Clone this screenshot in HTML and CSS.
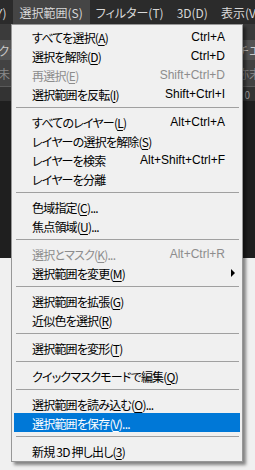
FILE: index.html
```html
<!DOCTYPE html>
<html lang="ja">
<head>
    <meta charset="UTF-8">
    <title>選択範囲メニュー</title>
    <link rel="stylesheet" href="styles.css">
</head>
<body>
<div class="screen">

    <div class="menubar">
        <span class="menu-title first">書式(Y)</span>
        <span class="menu-title open">選択範囲(S)</span>
        <span class="menu-title">フィルター(T)</span>
        <span class="menu-title">3D(D)</span>
        <span class="menu-title">表示(V)</span>
    </div>

    <div class="workspace">
        <div class="tabs"></div>
        <div class="options">
            <span class="edge-left">クか</span>
            <span class="edge-right">チエ</span>
        </div>
        <div class="doc-tabs">
            <span class="edge-left">未</span>
            <span class="edge-right">弥末</span>
        </div>
        <div class="ruler">
            <span class="edge-right">0</span>
        </div>
        <div class="pasteboard"></div>
        <div class="canvas"></div>
    </div>

    <div class="dropdown">
        <div class="item"><span class="label">すべてを選択(<u>A</u>)</span><span class="keys">Ctrl+A</span></div>
        <div class="item"><span class="label">選択を解除(<u>D</u>)</span><span class="keys">Ctrl+D</span></div>
        <div class="item disabled"><span class="label">再選択(<u>E</u>)</span><span class="keys">Shift+Ctrl+D</span></div>
        <div class="item"><span class="label">選択範囲を反転(<u>I</u>)</span><span class="keys">Shift+Ctrl+I</span></div>
        <div class="sep"></div>
        <div class="item"><span class="label">すべてのレイヤー(<u>L</u>)</span><span class="keys">Alt+Ctrl+A</span></div>
        <div class="item"><span class="label">レイヤーの選択を解除(<u>S</u>)</span></div>
        <div class="item"><span class="label">レイヤーを検索</span><span class="keys">Alt+Shift+Ctrl+F</span></div>
        <div class="item"><span class="label">レイヤーを分離</span></div>
        <div class="sep"></div>
        <div class="item"><span class="label">色域指定(<u>C</u>)...</span></div>
        <div class="item"><span class="label">焦点領域(<u>U</u>)...</span></div>
        <div class="sep"></div>
        <div class="item disabled"><span class="label">選択とマスク(<u>K</u>)...</span><span class="keys">Alt+Ctrl+R</span></div>
        <div class="item"><span class="label">選択範囲を変更(<u>M</u>)</span><span class="arrow"></span></div>
        <div class="sep"></div>
        <div class="item"><span class="label">選択範囲を拡張(<u>G</u>)</span></div>
        <div class="item"><span class="label">近似色を選択(<u>R</u>)</span></div>
        <div class="sep"></div>
        <div class="item"><span class="label">選択範囲を変形(<u>T</u>)</span></div>
        <div class="sep"></div>
        <div class="item"><span class="label">クイックマスクモードで編集(<u>Q</u>)</span></div>
        <div class="sep"></div>
        <div class="item"><span class="label">選択範囲を読み込む(<u>O</u>)...</span></div>
        <div class="item active"><span class="label">選択範囲を保存(<u>V</u>)...</span></div>
        <div class="sep"></div>
        <div class="item"><span class="label">新規 3D 押し出し(<u>3</u>)</span></div>
    </div>

</div>
</body>
</html>
```

FILE: styles.css
```css
body {
    margin: 0;
    font-family: "Noto Sans CJK JP", "Liberation Sans", sans-serif;
    font-size: 12px;
    background-color: #282828;
}

.screen {
    position: relative;
    width: 255px;
    height: 470px;
    overflow: hidden;
}

/* top menu bar */
.menubar {
    display: flex;
    height: 24px;
    background-color: #2b2b2b;
    color: #d8d8d8;
    font-feature-settings: "palt";
    white-space: nowrap;
}

.menu-title {
    display: flex;
    align-items: center;
    padding: 0 7px 0 6px;
}

.menu-title.first {
    margin-left: -38px;
}

.menu-title.open {
    background-color: #454545;
}

/* photoshop panels behind the menu */
.workspace {
    display: flex;
    flex-direction: column;
    color: #c8c8c8;
    white-space: nowrap;
}

.tabs {
    height: 16px;
    background-color: #3b3b3b;
}

.options,
.doc-tabs,
.ruler {
    display: flex;
    justify-content: space-between;
    align-items: center;
    overflow: hidden;
}

.options {
    height: 20px;
    background-color: #535353;
}

.doc-tabs {
    height: 26px;
    background-color: #424242;
    color: #8a8a8a;
}

.ruler {
    height: 14px;
    background-color: #333;
    border-top: 1px solid #5a5a5a;
    font-size: 10px;
    color: #9a9a9a;
}

.edge-left {
    margin-left: -2px;
}

.edge-right {
    margin-left: auto;
    margin-right: -6px;
}

.ruler .edge-right {
    margin-right: 5px;
}

.pasteboard {
    height: 157px;
    background-color: #1f1f1f;
}

.canvas {
    height: 212px;
    background-color: #f0f0f0;
}

/* dropdown */
.dropdown {
    position: absolute;
    top: 24px;
    left: 11px;
    width: 226px;
    padding: 2px 2px 1px 2px;
    background-color: #f0f0f0;
    border: 1px solid #979797;
    box-shadow: 3px 3px 3px rgba(0, 0, 0, 0.45);
    color: #000;
}

.item {
    display: flex;
    align-items: center;
    height: 19px;
    padding: 0 15px 0 18px;
    white-space: nowrap;
}

.label {
    font-feature-settings: "palt";
    letter-spacing: -0.8px;
    padding-top: 1px;
}

.keys {
    margin-left: auto;
    font-family: "Liberation Sans", sans-serif;
    font-size: 12px;
}

.item u {
    text-underline-offset: 2px;
}

.item.disabled {
    color: #8d8d8d;
}

.item.active {
    background-color: #0078d7;
    color: #fff;
}

.arrow {
    margin-left: auto;
    margin-right: -10px;
    width: 0;
    height: 0;
    border-top: 4px solid transparent;
    border-bottom: 4px solid transparent;
    border-left: 4px solid #000;
}

.sep {
    height: 9px;
    display: flex;
    align-items: center;
    padding: 0 1px 0 2px;
}

.sep::before {
    content: "";
    flex: 1;
    height: 1px;
    background-color: #a0a0a0;
}
```
